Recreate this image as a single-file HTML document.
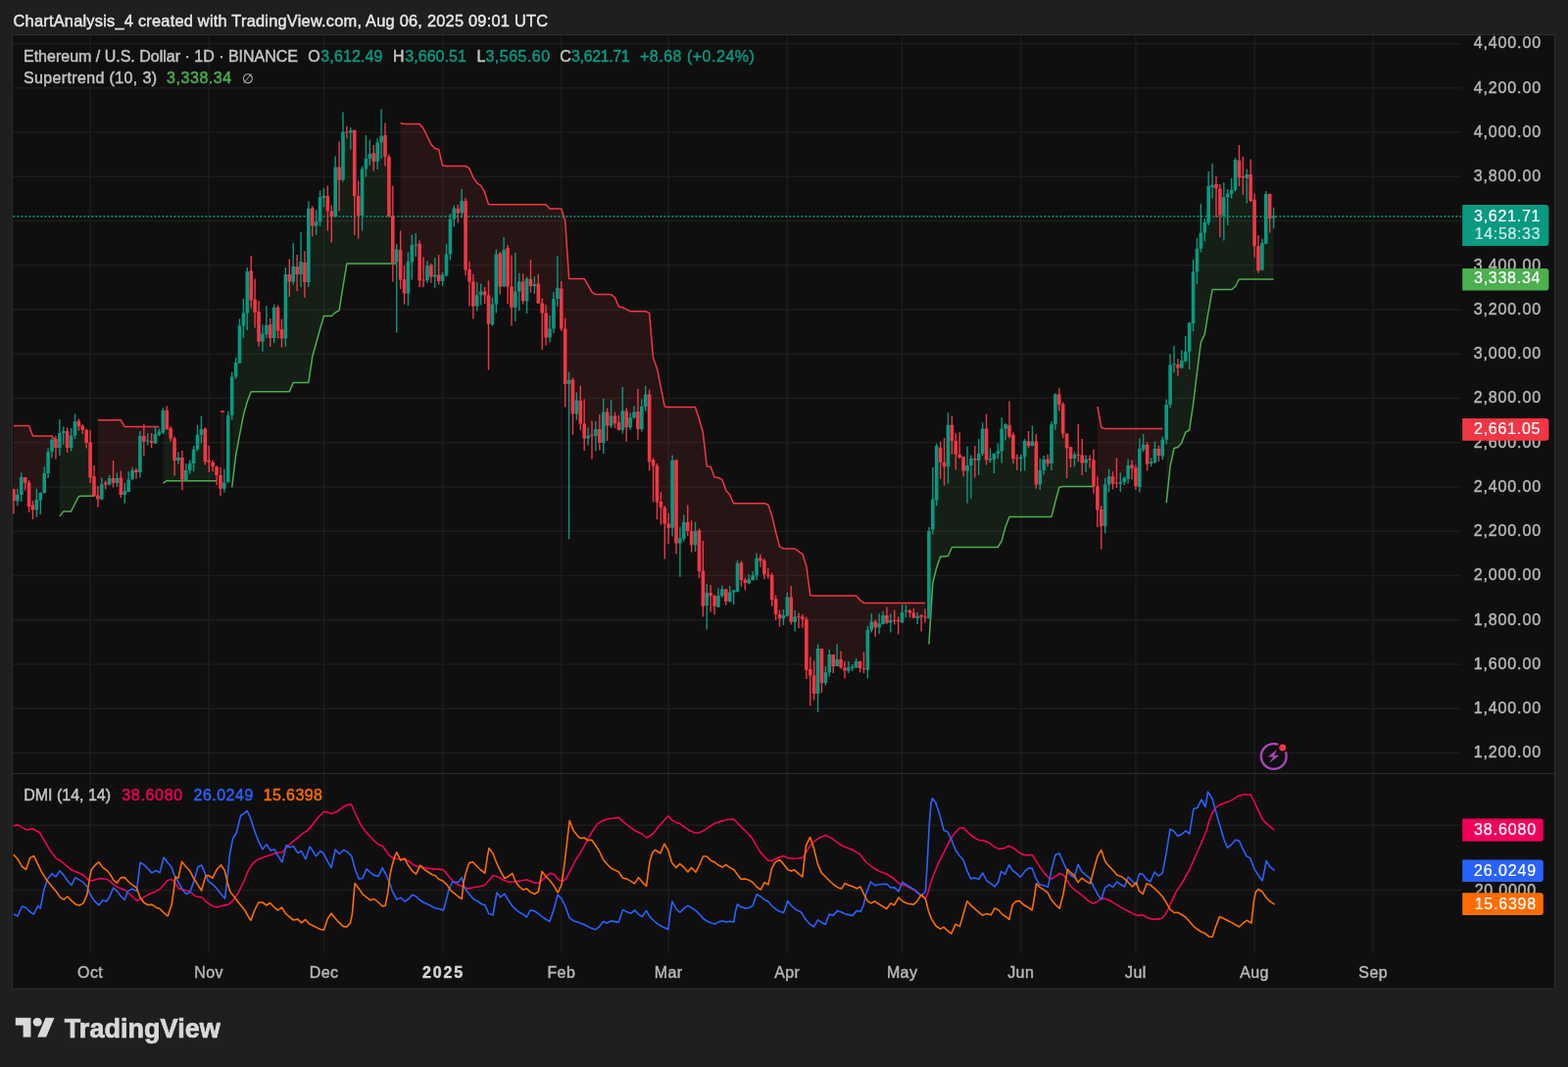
<!DOCTYPE html>
<html lang="en"><head><meta charset="utf-8"><title>ETHUSD chart</title>
<style>html,body{margin:0;padding:0;background:#1f1f1f;width:1600px;height:1089px;overflow:hidden}</style></head>
<body>
<svg width="1600" height="1089" viewBox="0 0 1600 1089" style="position:absolute;left:0;top:0;will-change:transform">
<defs><clipPath id="cp"><rect x="13" y="36" width="1478.5" height="753.4"/></clipPath><clipPath id="cd"><rect x="13" y="790" width="1478.5" height="182"/></clipPath></defs>
<rect x="12.5" y="35.5" width="1574.0" height="973.5" fill="#0f0f0f" stroke="#2c2c2c" stroke-width="1"/>
<path d="M92.10 36V972.5M213.24 36V972.5M330.48 36V972.5M451.62 36V972.5M572.76 36V972.5M682.18 36V972.5M803.32 36V972.5M920.55 36V972.5M1041.70 36V972.5M1158.93 36V972.5M1280.07 36V972.5M1401.21 36V972.5" stroke="#1a1a1a" stroke-width="1.8" fill="none"/>
<path d="M13 768.50H1491.5M13 723.25H1491.5M13 678.00H1491.5M13 632.75H1491.5M13 587.50H1491.5M13 542.25H1491.5M13 497.00H1491.5M13 451.75H1491.5M13 406.50H1491.5M13 361.25H1491.5M13 316.00H1491.5M13 270.75H1491.5M13 225.50H1491.5M13 180.25H1491.5M13 135.00H1491.5M13 89.75H1491.5M13 44.50H1491.5M13 842.25H1491.5M13 908.50H1491.5" stroke="#1c1c1c" stroke-width="1.3" fill="none"/>
<path d="M13 789.4H1586.5" stroke="#2f2f2f" stroke-width="1"/>
<g clip-path="url(#cp)">
<polygon points="13.9,434.4 17.9,434.4 21.8,434.4 25.7,434.4 29.6,434.4 33.5,445.0 37.4,445.0 41.3,445.0 45.2,445.0 49.1,445.0 53.0,445.0 56.9,450.0 56.9,454.7 53.0,456.1 49.1,472.5 45.2,491.6 41.3,510.3 37.4,514.4 33.5,519.4 29.6,505.6 25.7,491.9 21.8,496.6 17.9,507.8 13.9,508.4" fill="#ff5252" fill-opacity="0.1"/>
<polygon points="60.8,526.9 64.7,522.1 68.7,521.9 72.6,521.9 76.5,514.0 80.4,506.5 84.3,506.2 88.2,506.2 92.1,506.2 96.0,506.2 96.0,493.6 92.1,467.7 88.2,446.4 84.3,437.3 80.4,432.8 76.5,436.2 72.6,449.7 68.7,448.8 64.7,442.8 60.8,448.0" fill="#4caf50" fill-opacity="0.1"/>
<polygon points="99.9,428.8 103.8,428.8 107.7,428.8 111.6,428.8 115.5,428.8 119.5,428.8 123.4,428.8 127.3,435.6 131.2,435.6 135.1,435.6 139.0,435.6 142.9,435.6 146.8,435.6 150.7,435.6 154.6,435.6 158.5,435.6 162.4,435.6 162.4,441.7 158.5,445.9 154.6,450.2 150.7,449.1 146.8,448.6 142.9,463.6 139.0,482.0 135.1,483.9 131.2,493.8 127.3,503.3 123.4,495.3 119.5,490.2 115.5,487.2 111.6,490.8 107.7,494.2 103.8,500.5 99.9,507.2" fill="#ff5252" fill-opacity="0.1"/>
<polygon points="166.3,493.1 170.3,490.6 174.2,490.8 178.1,490.8 182.0,490.8 185.9,490.8 189.8,490.8 193.7,490.8 197.6,490.8 201.5,490.8 205.4,490.8 209.3,490.8 213.2,490.8 217.1,490.8 221.1,490.8 221.1,483.0 217.1,474.7 213.2,469.7 209.3,454.8 205.4,439.7 201.5,449.2 197.6,467.0 193.7,476.6 189.8,483.6 185.9,479.1 182.0,468.0 178.1,462.2 174.2,442.5 170.3,427.5 166.3,429.8" fill="#4caf50" fill-opacity="0.1"/>
<polygon points="225.0,420.0 228.9,420.0 228.9,493.1 225.0,491.7" fill="#ff5252" fill-opacity="0.1"/>
<polygon points="236.7,497.5 240.6,465.0 244.5,443.8 248.4,423.8 252.3,410.0 256.2,399.8 260.1,399.8 264.0,399.8 268.0,399.8 271.9,399.8 275.8,399.8 279.7,399.8 283.6,399.8 287.5,399.8 291.4,399.8 295.3,399.8 299.2,390.6 303.1,390.6 307.0,390.6 310.9,390.6 314.8,390.6 318.8,363.8 322.7,350.0 326.6,335.8 330.5,322.5 334.4,322.5 338.3,322.5 342.2,319.0 346.1,316.9 350.0,292.5 353.9,269.0 357.8,269.0 361.7,269.0 365.6,269.0 369.6,269.0 373.5,269.0 377.4,269.0 381.3,269.0 385.2,269.0 389.1,269.0 393.0,269.0 396.9,269.0 400.8,269.0 404.7,269.0 404.7,277.5 400.8,241.4 396.9,190.0 393.0,148.3 389.1,139.4 385.2,156.2 381.3,160.9 377.4,157.5 373.5,163.3 369.6,199.4 365.6,212.0 361.7,176.3 357.8,137.8 353.9,135.0 350.0,154.5 346.1,178.6 342.2,193.3 338.3,223.4 334.4,210.2 330.5,201.2 326.6,213.3 322.7,227.8 318.8,223.8 314.8,250.0 310.9,279.1 307.0,269.2 303.1,277.2 299.2,274.5 295.3,283.8 291.4,313.1 287.5,340.5 283.6,327.0 279.7,329.8 275.8,338.8 271.9,332.5 268.0,344.8 264.0,331.9 260.1,310.8 256.2,289.5 252.3,301.6 248.4,325.5 244.5,350.0 240.6,376.6 236.7,404.2" fill="#4caf50" fill-opacity="0.1"/>
<polygon points="408.6,125.6 412.5,126.5 416.4,126.5 420.4,126.5 424.3,126.5 428.2,126.5 432.1,131.2 436.0,139.4 439.9,147.2 443.8,151.6 447.7,152.5 451.6,168.8 455.5,169.4 459.4,169.4 463.3,169.4 467.2,169.4 471.2,169.4 475.1,169.4 479.0,171.9 482.9,181.2 486.8,186.9 490.7,189.4 494.6,196.2 498.5,208.5 502.4,208.8 506.3,208.8 510.2,208.8 514.1,208.8 518.1,208.8 522.0,208.8 525.9,208.8 529.8,208.8 533.7,208.8 537.6,208.8 541.5,208.8 545.4,208.8 549.3,208.8 553.2,208.8 557.1,208.8 561.0,212.9 564.9,213.1 568.9,213.1 572.8,213.1 576.7,225.0 580.6,284.4 584.5,284.4 588.4,284.4 592.3,284.4 596.2,284.4 600.1,291.0 604.0,298.1 607.9,300.6 611.8,300.6 615.7,300.6 619.7,300.6 623.6,300.6 627.5,303.5 631.4,313.1 635.3,313.8 639.2,315.6 643.1,317.8 647.0,317.8 650.9,317.8 654.8,317.8 658.7,317.8 662.6,319.4 666.5,365.0 670.5,376.2 674.4,395.6 678.3,415.0 682.2,415.6 686.1,415.6 690.0,415.6 693.9,415.6 697.8,415.6 701.7,415.6 705.6,415.6 709.5,415.6 713.4,427.5 717.3,441.2 721.3,476.0 725.2,476.2 729.1,486.9 733.0,487.5 736.9,489.4 740.8,500.6 744.7,505.0 748.6,513.8 752.5,513.8 756.4,513.8 760.3,513.8 764.2,513.8 768.1,513.8 772.1,513.8 776.0,513.8 779.9,513.8 783.8,515.0 787.7,526.2 791.6,543.0 795.5,558.1 799.4,559.8 803.3,560.0 807.2,560.0 811.1,560.0 815.0,562.8 819.0,565.6 822.9,578.1 826.8,607.5 830.7,608.1 834.6,608.1 838.5,608.1 842.4,608.1 846.3,608.1 850.2,608.1 854.1,608.1 858.0,608.1 861.9,608.1 865.8,608.1 869.8,608.1 873.7,608.1 877.6,612.5 881.5,615.6 885.4,615.6 889.3,615.6 893.2,615.6 897.1,615.6 901.0,615.6 904.9,615.6 908.8,615.6 912.7,615.6 916.6,615.6 920.6,615.6 924.5,615.6 928.4,615.6 932.3,615.6 936.2,615.6 940.1,615.6 944.0,615.6 944.0,629.2 940.1,632.2 936.2,630.5 932.3,627.2 928.4,625.3 924.5,623.8 920.6,628.3 916.6,635.9 912.7,631.7 908.8,635.2 904.9,630.0 901.0,631.6 897.1,637.5 893.2,639.4 889.3,637.3 885.4,664.5 881.5,679.4 877.6,679.4 873.7,677.5 869.8,681.4 865.8,681.9 861.9,683.3 858.0,675.5 854.1,672.7 850.2,675.8 846.3,677.0 842.4,690.6 838.5,681.9 834.6,688.6 830.7,696.6 826.8,690.9 822.9,659.5 819.0,632.3 815.0,631.2 811.1,633.0 807.2,619.8 803.3,618.0 799.4,629.8 795.5,630.0 791.6,619.7 787.7,600.5 783.8,585.9 779.9,579.8 776.0,571.6 772.1,578.3 768.1,588.6 764.2,592.3 760.3,594.7 756.4,584.4 752.5,588.8 748.6,606.4 744.7,607.8 740.8,608.4 736.9,604.2 733.0,612.0 729.1,615.3 725.2,608.6 721.3,615.5 717.3,595.6 713.4,563.4 709.5,548.4 705.6,548.3 701.7,534.4 697.8,540.3 693.9,557.7 690.0,514.5 686.1,505.2 682.2,538.0 678.3,534.8 674.4,516.9 670.5,497.8 666.5,481.2 662.6,438.0 658.7,407.7 654.8,425.3 650.9,425.9 647.0,422.2 643.1,430.6 639.2,430.6 635.3,423.9 631.4,433.3 627.5,428.4 623.6,425.9 619.7,430.3 615.7,435.6 611.8,443.1 607.9,443.4 604.0,446.6 600.1,445.6 596.2,436.9 592.3,418.4 588.4,415.2 584.5,409.8 580.6,427.4 576.7,366.9 572.8,313.8 568.9,293.3 564.9,319.7 561.0,337.8 557.1,331.9 553.2,322.5 549.3,297.2 545.4,291.1 541.5,285.2 537.6,298.6 533.7,296.1 529.8,295.2 525.9,299.4 522.0,299.8 518.1,276.4 514.1,270.5 510.2,277.2 506.3,285.9 502.4,319.5 498.5,323.9 494.6,300.5 490.7,299.8 486.8,304.8 482.9,301.4 479.0,285.5 475.1,240.9 471.2,209.5 467.2,216.7 463.3,219.2 459.4,241.7 455.5,268.0 451.6,284.4 447.7,279.5 443.8,280.0 439.9,277.7 436.0,278.1 432.1,281.9 428.2,268.4 424.3,249.8 420.4,260.6 416.4,283.9 412.5,291.6 408.6,267.8" fill="#ff5252" fill-opacity="0.1"/>
<polygon points="947.9,657.5 951.8,595.0 955.7,579.4 959.6,568.1 963.5,568.1 967.4,567.5 971.4,558.5 975.3,558.5 979.2,558.5 983.1,558.5 987.0,558.5 990.9,558.5 994.8,558.5 998.7,558.5 1002.6,558.5 1006.5,558.5 1010.4,558.5 1014.3,558.5 1018.2,558.5 1022.2,551.9 1026.1,537.5 1030.0,527.4 1033.9,527.4 1037.8,527.4 1041.7,527.4 1045.6,527.4 1049.5,527.4 1053.4,527.4 1057.3,527.4 1061.2,527.4 1065.1,527.4 1069.0,527.4 1073.0,527.4 1076.9,512.0 1080.8,497.2 1084.7,496.5 1088.6,496.5 1092.5,496.5 1096.4,496.5 1100.3,496.5 1104.2,496.5 1108.1,496.5 1112.0,496.5 1115.9,496.5 1115.9,482.0 1112.0,469.8 1108.1,471.9 1104.2,467.5 1100.3,458.1 1096.4,467.3 1092.5,464.4 1088.6,457.7 1084.7,428.1 1080.8,407.8 1076.9,418.9 1073.0,454.1 1069.0,470.5 1065.1,474.5 1061.2,485.6 1057.3,471.7 1053.4,448.9 1049.5,450.6 1045.6,461.2 1041.7,469.8 1037.8,469.8 1033.9,456.6 1030.0,434.1 1026.1,438.0 1022.2,449.2 1018.2,461.1 1014.3,469.4 1010.4,466.7 1006.5,450.9 1002.6,449.2 998.7,466.6 994.8,470.0 990.9,479.1 987.0,481.2 983.1,474.7 979.2,460.0 975.3,458.8 971.4,443.0 967.4,456.2 963.5,472.7 959.6,467.0 955.7,483.6 951.8,518.1 947.9,585.6" fill="#4caf50" fill-opacity="0.1"/>
<polygon points="1119.9,415.0 1123.8,436.2 1127.7,437.5 1131.6,437.5 1135.5,437.5 1139.4,437.5 1143.3,437.5 1147.2,437.5 1151.1,437.5 1155.0,437.5 1158.9,437.5 1162.8,437.5 1166.7,437.5 1170.7,437.5 1174.6,437.5 1178.5,437.5 1182.4,437.5 1186.3,437.5 1186.3,457.3 1182.4,462.2 1178.5,463.4 1174.6,472.0 1170.7,464.8 1166.7,454.2 1162.8,476.2 1158.9,487.0 1155.0,477.8 1151.1,481.6 1147.2,490.3 1143.3,492.5 1139.4,487.8 1135.5,490.2 1131.6,490.5 1127.7,515.9 1123.8,533.4 1119.9,510.3" fill="#ff5252" fill-opacity="0.1"/>
<polygon points="1190.2,513.1 1194.1,476.2 1198.0,457.5 1201.9,456.5 1205.8,451.9 1209.7,441.2 1213.6,439.0 1217.5,413.0 1221.5,380.0 1225.4,349.4 1229.3,341.2 1233.2,317.5 1237.1,295.6 1241.0,295.6 1244.9,295.6 1248.8,295.6 1252.7,295.6 1256.6,295.6 1260.5,292.5 1264.4,285.0 1268.3,285.0 1272.3,285.0 1276.2,285.0 1280.1,285.0 1284.0,285.0 1287.9,285.0 1291.8,285.0 1295.7,285.0 1299.6,285.0 1299.6,222.1 1295.7,214.1 1291.8,222.8 1287.9,260.9 1284.0,261.6 1280.1,228.8 1276.2,188.0 1272.3,185.0 1268.3,180.0 1264.4,170.8 1260.5,178.4 1256.6,194.1 1252.7,205.5 1248.8,213.3 1244.9,210.5 1241.0,195.6 1237.1,187.3 1233.2,205.6 1229.3,233.4 1225.4,239.2 1221.5,266.0 1217.5,302.6 1213.6,348.4 1209.7,360.0 1205.8,369.4 1201.9,374.4 1198.0,369.4 1194.1,390.8 1190.2,430.8" fill="#4caf50" fill-opacity="0.1"/>
<polyline points="13.9,434.4 17.9,434.4 21.8,434.4 25.7,434.4 29.6,434.4 33.5,445.0 37.4,445.0 41.3,445.0 45.2,445.0 49.1,445.0 53.0,445.0 56.9,450.0" fill="none" stroke="#f23645" stroke-width="1.5" stroke-linejoin="round"/>
<polyline points="60.8,526.9 64.7,522.1 68.7,521.9 72.6,521.9 76.5,514.0 80.4,506.5 84.3,506.2 88.2,506.2 92.1,506.2 96.0,506.2" fill="none" stroke="#4caf50" stroke-width="1.5" stroke-linejoin="round"/>
<polyline points="99.9,428.8 103.8,428.8 107.7,428.8 111.6,428.8 115.5,428.8 119.5,428.8 123.4,428.8 127.3,435.6 131.2,435.6 135.1,435.6 139.0,435.6 142.9,435.6 146.8,435.6 150.7,435.6 154.6,435.6 158.5,435.6 162.4,435.6" fill="none" stroke="#f23645" stroke-width="1.5" stroke-linejoin="round"/>
<polyline points="166.3,493.1 170.3,490.6 174.2,490.8 178.1,490.8 182.0,490.8 185.9,490.8 189.8,490.8 193.7,490.8 197.6,490.8 201.5,490.8 205.4,490.8 209.3,490.8 213.2,490.8 217.1,490.8 221.1,490.8" fill="none" stroke="#4caf50" stroke-width="1.5" stroke-linejoin="round"/>
<polyline points="225.0,420.0 228.9,420.0" fill="none" stroke="#f23645" stroke-width="1.5" stroke-linejoin="round"/>
<polyline points="236.7,497.5 240.6,465.0 244.5,443.8 248.4,423.8 252.3,410.0 256.2,399.8 260.1,399.8 264.0,399.8 268.0,399.8 271.9,399.8 275.8,399.8 279.7,399.8 283.6,399.8 287.5,399.8 291.4,399.8 295.3,399.8 299.2,390.6 303.1,390.6 307.0,390.6 310.9,390.6 314.8,390.6 318.8,363.8 322.7,350.0 326.6,335.8 330.5,322.5 334.4,322.5 338.3,322.5 342.2,319.0 346.1,316.9 350.0,292.5 353.9,269.0 357.8,269.0 361.7,269.0 365.6,269.0 369.6,269.0 373.5,269.0 377.4,269.0 381.3,269.0 385.2,269.0 389.1,269.0 393.0,269.0 396.9,269.0 400.8,269.0 404.7,269.0" fill="none" stroke="#4caf50" stroke-width="1.5" stroke-linejoin="round"/>
<polyline points="408.6,125.6 412.5,126.5 416.4,126.5 420.4,126.5 424.3,126.5 428.2,126.5 432.1,131.2 436.0,139.4 439.9,147.2 443.8,151.6 447.7,152.5 451.6,168.8 455.5,169.4 459.4,169.4 463.3,169.4 467.2,169.4 471.2,169.4 475.1,169.4 479.0,171.9 482.9,181.2 486.8,186.9 490.7,189.4 494.6,196.2 498.5,208.5 502.4,208.8 506.3,208.8 510.2,208.8 514.1,208.8 518.1,208.8 522.0,208.8 525.9,208.8 529.8,208.8 533.7,208.8 537.6,208.8 541.5,208.8 545.4,208.8 549.3,208.8 553.2,208.8 557.1,208.8 561.0,212.9 564.9,213.1 568.9,213.1 572.8,213.1 576.7,225.0 580.6,284.4 584.5,284.4 588.4,284.4 592.3,284.4 596.2,284.4 600.1,291.0 604.0,298.1 607.9,300.6 611.8,300.6 615.7,300.6 619.7,300.6 623.6,300.6 627.5,303.5 631.4,313.1 635.3,313.8 639.2,315.6 643.1,317.8 647.0,317.8 650.9,317.8 654.8,317.8 658.7,317.8 662.6,319.4 666.5,365.0 670.5,376.2 674.4,395.6 678.3,415.0 682.2,415.6 686.1,415.6 690.0,415.6 693.9,415.6 697.8,415.6 701.7,415.6 705.6,415.6 709.5,415.6 713.4,427.5 717.3,441.2 721.3,476.0 725.2,476.2 729.1,486.9 733.0,487.5 736.9,489.4 740.8,500.6 744.7,505.0 748.6,513.8 752.5,513.8 756.4,513.8 760.3,513.8 764.2,513.8 768.1,513.8 772.1,513.8 776.0,513.8 779.9,513.8 783.8,515.0 787.7,526.2 791.6,543.0 795.5,558.1 799.4,559.8 803.3,560.0 807.2,560.0 811.1,560.0 815.0,562.8 819.0,565.6 822.9,578.1 826.8,607.5 830.7,608.1 834.6,608.1 838.5,608.1 842.4,608.1 846.3,608.1 850.2,608.1 854.1,608.1 858.0,608.1 861.9,608.1 865.8,608.1 869.8,608.1 873.7,608.1 877.6,612.5 881.5,615.6 885.4,615.6 889.3,615.6 893.2,615.6 897.1,615.6 901.0,615.6 904.9,615.6 908.8,615.6 912.7,615.6 916.6,615.6 920.6,615.6 924.5,615.6 928.4,615.6 932.3,615.6 936.2,615.6 940.1,615.6 944.0,615.6" fill="none" stroke="#f23645" stroke-width="1.5" stroke-linejoin="round"/>
<polyline points="947.9,657.5 951.8,595.0 955.7,579.4 959.6,568.1 963.5,568.1 967.4,567.5 971.4,558.5 975.3,558.5 979.2,558.5 983.1,558.5 987.0,558.5 990.9,558.5 994.8,558.5 998.7,558.5 1002.6,558.5 1006.5,558.5 1010.4,558.5 1014.3,558.5 1018.2,558.5 1022.2,551.9 1026.1,537.5 1030.0,527.4 1033.9,527.4 1037.8,527.4 1041.7,527.4 1045.6,527.4 1049.5,527.4 1053.4,527.4 1057.3,527.4 1061.2,527.4 1065.1,527.4 1069.0,527.4 1073.0,527.4 1076.9,512.0 1080.8,497.2 1084.7,496.5 1088.6,496.5 1092.5,496.5 1096.4,496.5 1100.3,496.5 1104.2,496.5 1108.1,496.5 1112.0,496.5 1115.9,496.5" fill="none" stroke="#4caf50" stroke-width="1.5" stroke-linejoin="round"/>
<polyline points="1119.9,415.0 1123.8,436.2 1127.7,437.5 1131.6,437.5 1135.5,437.5 1139.4,437.5 1143.3,437.5 1147.2,437.5 1151.1,437.5 1155.0,437.5 1158.9,437.5 1162.8,437.5 1166.7,437.5 1170.7,437.5 1174.6,437.5 1178.5,437.5 1182.4,437.5 1186.3,437.5" fill="none" stroke="#f23645" stroke-width="1.5" stroke-linejoin="round"/>
<polyline points="1190.2,513.1 1194.1,476.2 1198.0,457.5 1201.9,456.5 1205.8,451.9 1209.7,441.2 1213.6,439.0 1217.5,413.0 1221.5,380.0 1225.4,349.4 1229.3,341.2 1233.2,317.5 1237.1,295.6 1241.0,295.6 1244.9,295.6 1248.8,295.6 1252.7,295.6 1256.6,295.6 1260.5,292.5 1264.4,285.0 1268.3,285.0 1272.3,285.0 1276.2,285.0 1280.1,285.0 1284.0,285.0 1287.9,285.0 1291.8,285.0 1295.7,285.0 1299.6,285.0" fill="none" stroke="#4caf50" stroke-width="1.5" stroke-linejoin="round"/>
<path d="M13.5 220.9H1492.5" stroke="#089981" stroke-width="1.7" stroke-dasharray="1.8 2.2" fill="none"/>
<path d="M17.85 498.8V516.2M21.76 482.5V511.9M37.39 498.8V528.1M41.30 502.5V525.0M45.21 476.2V503.8M49.11 457.5V488.1M53.02 446.9V467.5M60.84 428.1V465.0M64.75 435.6V453.8M72.56 436.9V460.6M76.47 422.5V448.1M103.82 487.5V510.6M111.64 485.0V495.6M119.45 482.5V496.9M127.27 493.1V513.8M131.18 481.2V502.5M135.09 476.9V490.0M142.90 440.0V487.5M150.72 441.9V454.4M158.53 435.0V453.1M162.44 437.5V445.0M166.35 416.2V443.1M181.98 461.2V473.8M189.79 473.1V491.2M193.70 469.4V483.8M197.61 455.0V481.2M201.52 433.8V460.6M205.43 424.4V452.5M228.87 478.8V502.5M232.78 419.4V493.1M236.69 380.0V428.8M240.60 365.0V386.9M244.50 325.6V371.2M248.41 305.0V345.0M252.32 273.1V336.9M267.95 331.2V358.8M271.86 311.9V345.0M279.67 310.6V350.0M291.40 273.1V353.8M299.21 248.1V290.6M307.03 236.9V293.1M314.84 205.6V293.1M322.66 214.4V240.0M326.57 194.4V231.2M330.48 191.9V211.2M342.20 159.4V221.9M350.01 114.4V185.6M357.83 130.0V152.5M369.55 169.4V235.6M373.46 138.1V180.6M377.37 142.5V168.8M385.18 141.2V173.1M389.09 111.2V161.9M404.72 248.8V339.4M416.45 257.5V311.9M420.36 239.4V285.6M424.26 238.1V261.9M435.99 266.2V288.8M443.80 263.1V293.8M451.62 278.1V291.9M455.53 248.8V282.5M459.43 218.1V265.6M463.34 209.4V231.2M471.16 193.1V222.5M486.79 288.1V317.5M490.70 289.4V311.2M502.42 303.8V332.5M506.33 254.4V319.4M514.14 241.9V292.5M525.87 258.1V328.1M529.77 278.8V316.9M537.59 282.5V320.0M545.40 282.5V300.0M561.04 321.9V349.4M564.94 298.1V340.0M568.85 261.2V313.1M580.57 379.4V550.2M588.39 400.6V428.8M600.11 436.2V454.4M607.93 430.0V460.6M615.75 406.9V463.1M623.56 408.1V436.9M635.28 395.0V442.5M643.10 421.2V438.8M647.01 414.4V427.5M654.82 407.5V440.6M658.73 393.8V419.4M686.09 464.4V547.5M693.90 538.1V588.8M697.81 525.6V552.5M709.53 532.5V563.1M721.26 596.2V642.5M732.98 600.6V620.0M736.89 597.5V610.0M744.70 598.1V615.0M748.61 601.9V616.9M752.52 571.9V604.4M764.24 586.2V596.2M768.15 583.1V592.5M772.06 564.4V591.9M799.41 621.9V638.1M803.32 604.4V629.4M811.14 623.1V644.4M834.58 657.5V726.9M842.40 680.0V699.4M846.31 663.1V690.6M854.12 657.5V680.0M865.84 675.0V686.9M869.75 678.1V685.0M873.66 671.9V681.9M885.38 638.8V692.5M889.29 626.2V645.6M897.11 626.2V646.9M901.01 623.8V637.5M908.83 626.2V645.6M920.55 616.9V635.6M924.46 617.5V630.6M936.18 625.0V636.9M947.91 538.1V631.2M951.82 476.9V545.6M955.72 452.5V516.2M967.45 421.2V493.8M986.99 455.6V513.8M990.89 464.4V508.8M998.71 448.1V485.0M1002.62 431.2V465.0M1010.43 457.5V471.9M1014.34 462.5V483.1M1018.25 452.5V468.1M1022.16 426.2V472.5M1026.06 431.9V449.4M1041.70 463.8V481.2M1045.60 448.1V480.6M1053.42 434.4V455.6M1061.23 468.1V500.0M1065.14 465.0V484.4M1072.96 430.0V480.0M1076.87 401.2V438.8M1096.40 461.2V476.2M1108.13 464.4V481.9M1127.67 488.1V544.4M1131.57 478.8V502.5M1143.30 482.5V501.9M1147.21 486.2V495.0M1151.11 468.8V493.8M1162.84 447.5V502.5M1166.74 443.1V461.2M1174.56 467.5V476.2M1178.47 450.6V473.1M1186.28 445.6V469.4M1190.19 407.5V453.8M1194.10 361.2V416.2M1198.01 353.1V380.6M1205.82 357.5V376.2M1209.73 343.1V369.4M1213.64 328.8V376.9M1217.55 265.0V338.1M1221.45 243.1V290.0M1225.36 208.1V257.5M1229.27 223.1V246.2M1233.18 175.0V230.0M1237.09 166.9V202.5M1248.81 186.2V245.6M1252.72 193.1V230.0M1256.62 181.9V202.5M1260.53 161.2V195.6M1272.26 172.5V207.5M1287.89 243.8V276.2M1291.79 195.0V249.4M1299.61 211.8V233.2" stroke="#089981" stroke-width="1.4" fill="none"/>
<path d="M13.94 498.8V524.4M25.67 486.9V500.6M29.58 490.0V523.1M33.48 511.2V530.0M56.93 445.0V468.8M68.65 436.2V461.9M80.38 427.5V439.4M84.28 433.1V443.1M88.19 437.5V457.5M92.10 438.8V493.1M96.01 475.0V506.9M99.92 496.2V517.5M107.73 490.6V499.4M115.55 470.0V497.5M123.36 480.6V508.1M138.99 478.1V488.8M146.81 433.1V465.6M154.62 441.9V456.9M170.26 414.4V438.8M174.16 435.0V450.6M178.07 445.6V485.6M185.89 460.0V500.0M209.33 436.2V474.4M213.24 455.0V481.9M217.15 469.4V481.2M221.06 475.6V495.0M224.97 476.9V506.2M256.23 261.2V314.4M260.14 284.4V334.4M264.04 306.9V353.8M275.77 325.0V353.8M283.58 311.2V345.6M287.49 325.6V354.4M295.31 264.4V303.1M303.12 260.0V296.9M310.94 256.2V303.8M318.75 210.6V241.2M334.38 189.4V235.6M338.29 209.4V247.5M346.11 144.4V215.6M353.92 128.8V141.2M361.74 132.5V240.0M365.65 184.4V243.8M381.28 148.1V174.4M393.00 125.6V169.4M396.91 157.5V221.9M400.82 189.4V287.5M408.63 235.6V295.0M412.54 271.2V310.6M428.17 245.6V293.1M432.08 262.5V293.1M439.89 268.8V288.8M447.71 260.0V290.6M467.25 208.8V227.5M475.06 201.9V281.2M478.97 266.9V312.5M482.88 280.0V325.6M494.60 293.1V310.0M498.51 286.2V377.5M510.23 256.9V300.6M518.05 250.0V310.0M521.96 260.6V332.5M533.68 279.4V310.6M541.50 265.0V298.8M549.31 280.0V310.0M553.22 304.4V356.9M557.13 311.2V352.5M572.76 286.9V338.1M576.67 324.4V415.6M584.48 385.6V443.8M592.30 393.8V438.8M596.21 407.5V460.0M604.02 429.4V468.8M611.84 423.1V459.4M619.65 416.2V450.0M627.47 420.6V436.9M631.38 423.8V439.4M639.19 416.2V450.6M650.92 396.9V448.8M662.64 397.5V480.6M666.55 467.5V512.5M670.45 473.1V530.0M674.36 501.9V535.6M678.27 516.2V570.6M682.18 523.8V555.0M689.99 468.8V565.6M701.72 515.6V546.9M705.62 531.2V563.8M713.44 539.4V590.0M717.35 551.9V629.4M725.16 596.9V624.4M729.07 606.9V627.5M740.79 601.2V617.5M756.43 572.5V598.8M760.33 589.4V602.5M775.97 565.6V578.8M779.87 570.0V591.2M783.78 579.4V590.6M787.69 584.4V618.8M791.60 607.5V633.1M795.50 622.5V639.4M807.23 598.1V637.5M815.04 625.6V641.2M818.95 626.9V641.2M822.86 629.4V693.1M826.77 670.6V720.6M830.67 674.4V714.4M838.49 661.9V706.9M850.21 668.1V686.9M858.03 664.4V683.1M861.94 675.0V692.5M877.57 674.4V686.2M881.48 665.6V686.9M893.20 632.5V650.0M904.92 619.4V636.9M912.74 622.5V637.5M916.65 629.4V647.5M928.37 621.9V630.6M932.28 621.2V631.2M940.09 626.9V644.4M944.00 621.2V635.6M959.63 450.6V488.8M963.54 446.9V495.6M971.36 424.4V463.8M975.26 441.9V479.4M979.17 441.2V468.1M983.08 465.6V486.2M994.80 455.0V487.5M1006.53 422.5V474.4M1029.97 409.4V447.5M1033.88 441.2V473.1M1037.79 463.8V480.0M1049.51 440.0V456.9M1057.33 443.1V498.8M1069.05 463.8V476.2M1080.77 396.2V419.4M1084.68 410.6V446.9M1088.59 442.5V488.1M1092.50 456.2V476.9M1100.31 433.1V471.2M1104.22 448.1V485.0M1112.04 464.4V477.5M1115.94 458.8V503.8M1119.85 486.2V538.1M1123.76 516.2V560.6M1135.48 481.2V499.4M1139.39 467.5V498.1M1155.02 469.4V489.4M1158.93 474.4V500.0M1170.65 451.2V480.6M1182.38 454.4V471.2M1201.92 366.2V383.8M1240.99 180.0V221.9M1244.90 188.1V241.9M1264.44 148.1V190.0M1268.35 160.0V198.8M1276.16 162.5V206.2M1280.07 197.5V262.5M1283.98 240.0V278.8M1295.70 197.5V237.5" stroke="#f23645" stroke-width="1.4" fill="none"/>
<path d="M16.05 505.0h3.6V511.2h-3.6zM19.96 486.9h3.6V505.0h-3.6zM35.59 510.0h3.6V520.6h-3.6zM39.50 503.1h3.6V510.6h-3.6zM43.41 483.1h3.6V503.1h-3.6zM47.31 461.2h3.6V483.1h-3.6zM51.22 448.8h3.6V461.2h-3.6zM59.04 441.9h3.6V456.9h-3.6zM62.95 440.0h3.6V441.9h-3.6zM70.76 444.4h3.6V456.9h-3.6zM74.67 430.0h3.6V444.4h-3.6zM102.02 494.4h3.6V509.4h-3.6zM109.84 488.1h3.6V494.4h-3.6zM117.65 488.1h3.6V493.1h-3.6zM125.47 501.2h3.6V505.0h-3.6zM129.38 489.4h3.6V501.9h-3.6zM133.29 480.0h3.6V488.8h-3.6zM141.10 445.0h3.6V481.9h-3.6zM148.92 449.4h3.6V450.6h-3.6zM156.73 443.1h3.6V452.5h-3.6zM160.64 440.6h3.6V443.8h-3.6zM164.55 418.8h3.6V441.2h-3.6zM180.18 466.9h3.6V470.0h-3.6zM187.99 480.0h3.6V490.0h-3.6zM191.90 473.1h3.6V480.0h-3.6zM195.81 458.8h3.6V473.1h-3.6zM199.72 443.8h3.6V458.8h-3.6zM203.63 438.1h3.6V443.8h-3.6zM227.07 492.5h3.6V498.8h-3.6zM230.98 423.8h3.6V491.9h-3.6zM234.89 384.4h3.6V423.8h-3.6zM238.80 370.0h3.6V384.4h-3.6zM242.70 332.5h3.6V370.6h-3.6zM246.61 319.4h3.6V332.5h-3.6zM250.52 276.9h3.6V319.4h-3.6zM266.15 340.6h3.6V348.8h-3.6zM270.06 331.9h3.6V341.2h-3.6zM277.87 313.8h3.6V345.0h-3.6zM289.60 280.0h3.6V345.6h-3.6zM297.41 271.9h3.6V287.5h-3.6zM305.23 266.9h3.6V280.0h-3.6zM313.04 213.1h3.6V288.1h-3.6zM320.86 226.2h3.6V230.6h-3.6zM324.77 201.2h3.6V226.2h-3.6zM328.68 200.0h3.6V201.9h-3.6zM340.40 170.6h3.6V221.2h-3.6zM348.21 134.4h3.6V183.8h-3.6zM356.03 133.1h3.6V135.6h-3.6zM367.75 172.5h3.6V220.0h-3.6zM371.66 161.9h3.6V172.5h-3.6zM375.57 156.9h3.6V161.9h-3.6zM383.38 145.6h3.6V165.0h-3.6zM387.29 138.8h3.6V145.6h-3.6zM402.92 254.4h3.6V267.5h-3.6zM414.65 266.9h3.6V299.4h-3.6zM418.56 250.0h3.6V267.5h-3.6zM422.46 249.4h3.6V250.4h-3.6zM434.19 271.2h3.6V286.2h-3.6zM442.00 280.6h3.6V282.5h-3.6zM449.82 280.6h3.6V286.9h-3.6zM453.73 259.4h3.6V281.2h-3.6zM457.63 223.8h3.6V259.4h-3.6zM461.54 212.5h3.6V223.8h-3.6zM469.36 205.0h3.6V217.5h-3.6zM484.99 301.2h3.6V312.5h-3.6zM488.90 297.5h3.6V301.2h-3.6zM500.62 310.6h3.6V331.2h-3.6zM504.53 259.4h3.6V310.6h-3.6zM512.34 255.0h3.6V292.5h-3.6zM524.07 297.5h3.6V313.8h-3.6zM527.97 287.5h3.6V297.5h-3.6zM535.79 284.4h3.6V307.5h-3.6zM543.60 290.0h3.6V291.9h-3.6zM559.24 335.6h3.6V344.4h-3.6zM563.14 305.0h3.6V335.6h-3.6zM567.05 293.8h3.6V305.0h-3.6zM578.77 388.1h3.6V391.9h-3.6zM586.59 408.8h3.6V422.5h-3.6zM598.31 444.4h3.6V447.5h-3.6zM606.13 438.1h3.6V445.0h-3.6zM613.95 420.6h3.6V451.9h-3.6zM621.76 424.4h3.6V434.4h-3.6zM633.48 419.4h3.6V438.8h-3.6zM641.30 426.2h3.6V436.2h-3.6zM645.21 420.6h3.6V426.2h-3.6zM653.02 415.0h3.6V438.1h-3.6zM656.93 402.5h3.6V415.0h-3.6zM684.29 470.0h3.6V538.8h-3.6zM692.10 549.4h3.6V554.4h-3.6zM696.01 533.1h3.6V550.0h-3.6zM707.73 541.9h3.6V556.2h-3.6zM719.46 605.0h3.6V618.1h-3.6zM731.18 608.1h3.6V619.4h-3.6zM735.09 601.2h3.6V608.1h-3.6zM742.90 604.4h3.6V613.8h-3.6zM746.81 602.5h3.6V604.4h-3.6zM750.72 575.0h3.6V603.8h-3.6zM762.44 591.2h3.6V595.6h-3.6zM766.35 586.9h3.6V591.9h-3.6zM770.26 569.4h3.6V587.5h-3.6zM797.61 628.1h3.6V631.2h-3.6zM801.52 609.4h3.6V628.8h-3.6zM809.34 629.4h3.6V635.0h-3.6zM832.78 661.9h3.6V708.1h-3.6zM840.60 686.2h3.6V696.9h-3.6zM844.51 668.1h3.6V686.2h-3.6zM852.32 673.1h3.6V680.0h-3.6zM864.04 681.2h3.6V684.4h-3.6zM867.95 680.6h3.6V681.9h-3.6zM871.86 675.0h3.6V681.2h-3.6zM883.58 643.1h3.6V683.8h-3.6zM887.49 634.4h3.6V643.1h-3.6zM895.31 636.2h3.6V640.6h-3.6zM899.21 628.1h3.6V636.9h-3.6zM907.03 633.1h3.6V635.6h-3.6zM918.75 625.0h3.6V635.6h-3.6zM922.66 623.1h3.6V624.1h-3.6zM934.38 628.8h3.6V631.2h-3.6zM946.11 541.9h3.6V631.2h-3.6zM950.02 509.4h3.6V540.6h-3.6zM953.92 455.0h3.6V510.6h-3.6zM965.65 433.8h3.6V476.2h-3.6zM985.19 475.0h3.6V480.6h-3.6zM989.09 468.1h3.6V475.0h-3.6zM996.91 463.1h3.6V470.0h-3.6zM1000.82 437.5h3.6V463.1h-3.6zM1008.63 468.1h3.6V469.4h-3.6zM1012.54 463.1h3.6V468.8h-3.6zM1016.45 460.6h3.6V463.1h-3.6zM1020.36 437.5h3.6V460.6h-3.6zM1024.26 433.1h3.6V437.5h-3.6zM1039.90 466.2h3.6V468.1h-3.6zM1043.80 450.0h3.6V466.2h-3.6zM1051.62 450.6h3.6V455.0h-3.6zM1059.43 480.0h3.6V494.4h-3.6zM1063.34 468.8h3.6V480.0h-3.6zM1071.16 433.1h3.6V473.1h-3.6zM1075.07 402.5h3.6V433.1h-3.6zM1094.60 463.8h3.6V468.1h-3.6zM1106.33 468.8h3.6V472.5h-3.6zM1125.87 494.4h3.6V536.9h-3.6zM1129.77 486.2h3.6V494.4h-3.6zM1141.50 491.9h3.6V493.8h-3.6zM1145.41 488.1h3.6V491.9h-3.6zM1149.31 475.0h3.6V488.8h-3.6zM1161.04 458.1h3.6V496.9h-3.6zM1164.94 453.8h3.6V458.8h-3.6zM1172.76 471.2h3.6V473.1h-3.6zM1176.67 458.1h3.6V471.9h-3.6zM1184.48 448.8h3.6V465.6h-3.6zM1188.39 413.1h3.6V448.8h-3.6zM1192.30 372.5h3.6V413.1h-3.6zM1196.21 371.2h3.6V372.5h-3.6zM1204.02 368.1h3.6V375.6h-3.6zM1207.93 358.8h3.6V368.8h-3.6zM1211.84 329.4h3.6V358.8h-3.6zM1215.75 277.2h3.6V330.0h-3.6zM1219.65 253.8h3.6V277.2h-3.6zM1223.56 237.5h3.6V253.8h-3.6zM1227.47 226.9h3.6V237.5h-3.6zM1231.38 190.0h3.6V227.5h-3.6zM1235.29 188.8h3.6V191.2h-3.6zM1247.01 201.2h3.6V220.0h-3.6zM1250.92 197.5h3.6V201.2h-3.6zM1254.82 193.8h3.6V198.1h-3.6zM1258.73 163.1h3.6V193.8h-3.6zM1270.46 178.1h3.6V181.9h-3.6zM1286.09 248.1h3.6V275.6h-3.6zM1289.99 198.1h3.6V248.8h-3.6zM1297.81 220.6h3.6V222.6h-3.6z" fill="#089981"/>
<path d="M12.14 499.4h3.6V511.2h-3.6zM23.87 486.9h3.6V493.1h-3.6zM27.78 492.5h3.6V516.9h-3.6zM31.68 515.6h3.6V520.6h-3.6zM55.13 448.1h3.6V456.9h-3.6zM66.85 440.0h3.6V456.9h-3.6zM78.58 429.4h3.6V435.0h-3.6zM82.48 434.4h3.6V438.8h-3.6zM86.39 438.8h3.6V451.9h-3.6zM90.30 451.2h3.6V487.5h-3.6zM94.21 486.2h3.6V506.2h-3.6zM98.12 505.6h3.6V509.4h-3.6zM105.93 492.5h3.6V494.4h-3.6zM113.75 488.1h3.6V493.1h-3.6zM121.56 487.5h3.6V505.0h-3.6zM137.19 479.4h3.6V481.9h-3.6zM145.01 445.0h3.6V450.6h-3.6zM152.82 450.0h3.6V451.9h-3.6zM168.46 418.8h3.6V438.1h-3.6zM172.36 436.9h3.6V447.5h-3.6zM176.27 447.5h3.6V470.0h-3.6zM184.09 466.9h3.6V489.4h-3.6zM207.53 437.5h3.6V471.2h-3.6zM211.44 470.0h3.6V471.9h-3.6zM215.35 471.9h3.6V476.2h-3.6zM219.26 476.2h3.6V485.0h-3.6zM223.17 485.0h3.6V498.8h-3.6zM254.43 276.2h3.6V306.2h-3.6zM258.34 305.6h3.6V318.8h-3.6zM262.24 318.1h3.6V348.8h-3.6zM273.97 331.2h3.6V345.0h-3.6zM281.78 313.8h3.6V337.5h-3.6zM285.69 336.2h3.6V345.6h-3.6zM293.51 280.0h3.6V287.5h-3.6zM301.32 271.9h3.6V280.0h-3.6zM309.14 268.1h3.6V288.1h-3.6zM316.95 212.5h3.6V230.6h-3.6zM332.58 200.0h3.6V215.6h-3.6zM336.49 215.6h3.6V221.2h-3.6zM344.31 170.6h3.6V183.8h-3.6zM352.12 134.4h3.6V135.6h-3.6zM359.94 132.8h3.6V200.0h-3.6zM363.85 200.0h3.6V220.0h-3.6zM379.48 156.2h3.6V165.0h-3.6zM391.20 138.1h3.6V160.0h-3.6zM395.11 160.0h3.6V220.6h-3.6zM399.02 220.6h3.6V268.1h-3.6zM406.83 255.0h3.6V285.6h-3.6zM410.74 285.0h3.6V299.4h-3.6zM426.37 248.8h3.6V286.2h-3.6zM430.28 285.6h3.6V286.6h-3.6zM438.09 270.6h3.6V282.5h-3.6zM445.91 280.6h3.6V286.9h-3.6zM465.45 213.1h3.6V217.5h-3.6zM473.26 205.0h3.6V275.6h-3.6zM477.17 275.0h3.6V287.5h-3.6zM481.08 287.5h3.6V312.5h-3.6zM492.80 297.5h3.6V301.2h-3.6zM496.71 301.2h3.6V330.6h-3.6zM508.43 258.8h3.6V292.5h-3.6zM516.25 253.1h3.6V292.5h-3.6zM520.16 292.5h3.6V313.8h-3.6zM531.88 287.5h3.6V306.9h-3.6zM539.70 285.0h3.6V291.9h-3.6zM547.51 289.4h3.6V309.4h-3.6zM551.42 309.4h3.6V319.4h-3.6zM555.33 319.4h3.6V344.4h-3.6zM570.96 294.4h3.6V335.6h-3.6zM574.87 335.6h3.6V391.9h-3.6zM582.68 387.5h3.6V422.5h-3.6zM590.50 408.8h3.6V432.5h-3.6zM594.41 432.5h3.6V447.5h-3.6zM602.22 443.8h3.6V444.8h-3.6zM610.04 438.1h3.6V451.9h-3.6zM617.85 420.6h3.6V434.4h-3.6zM625.67 424.4h3.6V431.9h-3.6zM629.58 431.2h3.6V438.8h-3.6zM637.39 419.4h3.6V436.2h-3.6zM649.12 420.0h3.6V438.1h-3.6zM660.84 402.5h3.6V471.2h-3.6zM664.75 469.4h3.6V475.6h-3.6zM668.65 475.6h3.6V512.5h-3.6zM672.56 511.9h3.6V518.1h-3.6zM676.47 518.1h3.6V534.4h-3.6zM680.38 534.4h3.6V538.8h-3.6zM688.19 469.4h3.6V554.4h-3.6zM699.92 533.1h3.6V541.9h-3.6zM703.82 541.9h3.6V556.2h-3.6zM711.64 541.2h3.6V583.1h-3.6zM715.55 582.5h3.6V618.8h-3.6zM723.36 605.0h3.6V608.1h-3.6zM727.27 608.1h3.6V618.8h-3.6zM738.99 601.2h3.6V613.8h-3.6zM754.63 574.4h3.6V591.9h-3.6zM758.53 591.9h3.6V595.0h-3.6zM774.17 569.4h3.6V572.5h-3.6zM778.07 571.9h3.6V586.2h-3.6zM781.98 586.2h3.6V587.5h-3.6zM785.89 586.9h3.6V611.9h-3.6zM789.80 611.2h3.6V626.9h-3.6zM793.70 626.9h3.6V631.2h-3.6zM805.43 609.4h3.6V634.4h-3.6zM813.24 628.8h3.6V629.8h-3.6zM817.15 629.4h3.6V631.9h-3.6zM821.06 631.9h3.6V683.8h-3.6zM824.97 683.1h3.6V689.4h-3.6zM828.87 689.4h3.6V708.1h-3.6zM836.69 661.9h3.6V696.9h-3.6zM848.41 668.1h3.6V680.0h-3.6zM856.23 673.1h3.6V681.2h-3.6zM860.14 681.2h3.6V684.4h-3.6zM875.77 675.0h3.6V681.9h-3.6zM879.68 681.9h3.6V683.1h-3.6zM891.40 634.4h3.6V640.6h-3.6zM903.12 628.1h3.6V635.6h-3.6zM910.94 633.1h3.6V634.1h-3.6zM914.85 633.1h3.6V634.1h-3.6zM926.57 623.1h3.6V625.6h-3.6zM930.48 625.6h3.6V630.6h-3.6zM938.29 628.1h3.6V629.4h-3.6zM942.20 629.4h3.6V630.6h-3.6zM957.83 456.9h3.6V471.9h-3.6zM961.74 471.9h3.6V476.2h-3.6zM969.56 433.8h3.6V450.0h-3.6zM973.46 450.0h3.6V463.8h-3.6zM977.37 463.8h3.6V466.9h-3.6zM981.28 466.2h3.6V480.6h-3.6zM993.00 468.1h3.6V469.4h-3.6zM1004.73 437.5h3.6V469.4h-3.6zM1028.17 433.8h3.6V445.6h-3.6zM1032.08 443.8h3.6V468.1h-3.6zM1035.99 467.5h3.6V468.5h-3.6zM1047.71 450.6h3.6V455.0h-3.6zM1055.53 450.6h3.6V494.4h-3.6zM1067.25 468.8h3.6V473.1h-3.6zM1078.97 402.5h3.6V413.1h-3.6zM1082.88 412.5h3.6V442.5h-3.6zM1086.79 442.5h3.6V457.5h-3.6zM1090.70 456.2h3.6V468.1h-3.6zM1098.51 463.8h3.6V464.8h-3.6zM1102.42 464.4h3.6V472.5h-3.6zM1110.24 468.1h3.6V469.4h-3.6zM1114.14 469.4h3.6V496.2h-3.6zM1118.05 496.2h3.6V520.6h-3.6zM1121.96 520.0h3.6V536.9h-3.6zM1133.68 486.2h3.6V493.8h-3.6zM1137.59 492.5h3.6V493.5h-3.6zM1153.22 474.4h3.6V478.1h-3.6zM1157.13 477.5h3.6V496.2h-3.6zM1168.85 453.8h3.6V473.8h-3.6zM1180.58 458.1h3.6V465.0h-3.6zM1200.12 371.9h3.6V375.6h-3.6zM1239.19 188.1h3.6V192.5h-3.6zM1243.10 192.5h3.6V219.4h-3.6zM1262.64 163.8h3.6V181.2h-3.6zM1266.55 180.0h3.6V181.2h-3.6zM1274.36 178.1h3.6V205.0h-3.6zM1278.27 203.8h3.6V251.2h-3.6zM1282.18 251.2h3.6V276.2h-3.6zM1293.90 198.1h3.6V223.1h-3.6z" fill="#f23645"/>
</g>
<g clip-path="url(#cd)" fill="none" stroke-width="1.6" stroke-linejoin="round">
<polyline points="13.8,842.9 18.1,841.9 22.5,844.4 26.9,846.9 33.8,846.0 40.6,850.0 45.0,857.5 50.0,866.2 56.9,875.6 65.0,881.2 73.1,888.1 81.2,891.2 85.6,893.8 90.0,898.1 93.8,899.0 101.9,896.5 108.8,897.2 115.0,901.9 120.0,905.6 127.5,908.5 135.0,915.0 140.0,919.4 145.0,916.9 151.2,913.1 157.5,910.6 163.1,907.5 171.2,898.5 175.0,897.5 178.1,900.0 182.5,906.9 188.8,908.5 193.8,910.0 200.0,915.0 206.2,916.0 210.0,920.0 212.5,921.9 217.5,925.0 221.2,926.0 226.9,924.4 233.1,923.1 237.5,919.4 242.5,912.5 248.1,901.2 253.8,887.5 258.8,880.0 263.8,876.9 270.0,874.4 276.2,872.5 282.5,870.2 288.1,869.8 292.5,865.0 298.8,858.8 303.8,855.0 308.8,850.6 313.1,848.1 318.8,841.9 325.0,833.8 330.0,828.8 334.4,828.8 338.1,830.6 343.8,828.5 350.0,823.8 354.4,821.5 358.5,821.0 362.5,830.0 367.5,840.6 372.5,848.1 377.5,853.8 382.5,858.8 386.2,861.9 390.6,863.8 395.0,870.0 398.1,873.8 400.0,875.0 401.2,876.0 406.2,876.5 412.5,876.9 416.9,878.8 423.8,883.8 430.0,885.0 436.2,886.2 443.8,886.9 452.5,887.8 457.5,893.8 462.5,900.0 467.5,903.1 472.5,905.0 477.5,906.9 482.5,906.0 488.8,904.8 494.4,903.5 498.8,898.8 503.1,893.5 507.5,894.8 512.5,897.5 518.8,900.2 525.0,899.8 531.2,899.0 537.5,897.8 543.8,900.6 549.4,901.2 553.8,898.1 557.5,894.0 561.9,891.2 565.6,892.5 570.0,898.1 574.4,899.4 577.5,896.9 582.5,887.5 587.5,877.5 590.0,873.8 595.0,865.6 600.0,856.2 605.0,847.5 610.0,840.6 615.0,837.5 621.2,835.6 626.2,835.0 631.2,834.4 636.2,838.8 642.5,843.8 648.1,848.1 655.0,851.0 659.6,855.0 663.8,853.1 667.5,849.4 672.5,843.1 677.5,837.5 681.9,832.8 685.6,836.9 690.0,839.4 693.8,840.6 698.1,843.8 703.1,847.2 708.8,850.0 713.1,850.0 717.5,848.1 723.8,843.8 730.0,840.0 736.2,838.1 742.5,836.5 748.8,836.0 753.1,840.6 757.5,845.0 762.5,850.0 767.5,855.6 771.2,861.9 775.6,869.4 780.0,874.4 783.8,878.1 787.5,878.5 793.8,875.6 799.6,873.5 803.8,875.6 808.8,876.2 813.8,876.0 818.8,875.6 822.5,870.0 826.2,863.8 830.0,859.4 836.2,855.0 842.5,852.5 848.8,855.6 853.8,859.4 858.8,863.1 865.0,865.6 870.0,867.5 877.5,871.9 883.8,880.0 890.0,885.0 896.2,888.8 904.4,891.9 911.2,896.2 917.5,901.9 923.8,903.8 931.2,907.5 937.5,912.2 940.0,914.4 944.4,916.9 946.9,911.2 950.0,900.0 953.8,890.0 957.5,881.2 961.2,873.8 965.0,866.2 970.0,856.2 975.0,849.4 979.4,845.0 983.1,844.8 987.5,849.4 992.5,853.8 998.8,857.5 1003.8,857.8 1010.0,860.6 1015.0,864.4 1019.4,866.6 1025.0,865.6 1029.6,863.1 1035.0,866.2 1041.9,871.5 1047.5,872.9 1053.1,872.5 1056.9,878.1 1061.2,885.0 1066.2,891.9 1070.6,896.2 1073.1,896.9 1077.5,894.4 1081.2,891.5 1085.6,893.5 1089.4,899.4 1093.1,905.0 1097.5,908.8 1102.5,912.5 1106.9,916.2 1111.2,920.0 1115.6,921.9 1120.0,920.0 1123.8,916.9 1128.8,917.5 1133.8,919.8 1138.8,923.1 1145.0,926.9 1151.2,930.0 1157.5,933.1 1161.2,934.4 1165.6,933.8 1170.0,936.2 1175.0,938.1 1181.2,938.1 1185.6,937.2 1188.8,933.8 1191.9,928.1 1195.0,921.2 1200.0,910.6 1207.5,899.0 1213.8,887.5 1218.8,876.2 1223.8,865.0 1228.1,855.0 1231.2,847.5 1233.8,837.5 1236.9,830.0 1240.0,825.0 1243.8,821.9 1248.8,819.8 1253.8,818.1 1258.8,815.6 1263.8,812.2 1268.8,811.0 1276.2,811.0 1279.4,817.5 1283.8,826.9 1287.5,835.0 1291.2,839.4 1296.2,843.8 1300.6,847.2" stroke="#f0005a"/>
<polyline points="13.8,933.1 18.1,935.0 22.5,925.0 26.2,926.2 30.6,930.6 34.4,933.1 38.8,924.4 41.2,927.2 45.0,907.5 48.8,896.9 53.1,891.6 56.9,895.0 61.0,888.8 65.0,893.1 68.8,898.8 72.9,903.5 76.9,895.6 81.2,898.1 85.0,900.6 88.8,905.0 91.9,912.5 96.2,919.4 100.9,923.8 105.0,918.8 108.8,920.0 111.9,915.0 115.6,906.2 119.4,909.4 123.1,914.4 127.1,918.5 130.6,909.4 135.0,907.2 139.4,909.4 143.1,880.4 146.9,882.5 151.2,886.9 155.0,890.9 159.4,888.5 163.1,890.6 167.1,875.0 171.2,880.6 175.0,885.0 178.1,893.8 181.9,900.0 186.2,908.1 190.0,912.5 193.8,910.6 197.5,900.6 201.9,885.0 205.6,882.9 210.0,893.1 212.5,899.4 216.9,902.5 221.2,906.9 225.6,912.5 229.6,916.9 231.9,897.5 234.4,872.5 237.5,856.2 241.2,850.0 245.6,832.5 250.0,829.4 252.1,827.5 255.6,835.0 260.0,848.8 263.8,858.8 268.1,866.9 271.9,861.6 276.2,868.1 280.0,866.9 283.8,873.8 287.9,880.0 292.1,862.5 295.6,864.8 299.4,863.8 303.8,870.6 307.5,868.5 311.9,876.9 316.2,864.1 319.4,868.8 322.5,873.8 326.9,868.8 330.0,870.6 334.4,879.4 338.1,885.6 342.2,867.1 346.2,871.5 350.6,867.5 354.4,869.4 358.8,873.8 362.5,887.5 366.2,896.9 370.0,896.5 374.0,886.9 378.1,890.6 381.9,893.5 386.2,894.4 390.2,885.6 394.4,893.8 398.1,902.5 400.0,908.8 401.2,911.2 404.8,918.1 408.8,916.2 412.9,920.0 416.9,917.5 421.0,913.1 424.6,915.0 428.8,918.8 433.1,921.5 436.9,923.1 440.6,925.0 444.4,927.1 448.1,927.5 452.5,929.0 455.0,920.0 458.1,907.5 461.9,900.0 467.5,900.6 471.2,895.6 474.0,906.2 478.8,912.5 483.1,917.5 487.5,920.0 491.2,922.5 494.8,923.8 498.8,932.5 503.1,934.0 506.9,911.0 510.6,915.6 514.8,912.2 518.8,918.8 522.5,924.4 526.2,928.1 530.0,931.2 533.8,933.1 537.5,936.0 541.2,928.8 545.6,930.0 549.4,932.5 553.1,935.6 557.5,938.5 561.0,940.6 565.0,928.8 569.1,913.1 573.1,917.5 576.9,925.0 581.2,936.9 585.6,940.0 590.0,941.2 596.2,943.8 602.5,946.9 607.5,948.8 611.2,946.2 615.6,940.6 619.4,942.2 623.8,939.8 627.5,940.6 631.2,941.5 635.6,928.5 639.4,930.6 643.8,932.2 647.9,929.0 651.5,933.1 655.4,935.6 659.4,929.4 663.1,935.6 667.5,940.0 671.2,943.1 676.2,946.0 681.9,948.5 683.8,932.5 686.0,920.0 689.8,927.5 693.8,931.2 698.1,926.9 701.9,924.4 706.2,926.9 710.0,929.4 713.8,933.1 717.5,937.5 721.2,940.0 725.6,941.9 729.6,943.1 733.8,940.6 737.5,940.0 741.2,941.0 745.0,940.2 748.8,941.0 750.6,930.0 752.5,922.8 756.2,925.6 760.6,927.2 764.4,926.5 768.1,924.4 772.1,912.8 776.2,915.0 780.0,918.1 780.6,918.5 783.8,920.0 788.1,925.0 791.9,928.1 795.6,930.2 799.6,931.5 803.8,919.4 807.5,924.4 811.9,928.1 817.5,931.0 821.9,938.1 826.2,943.1 830.6,946.0 834.4,938.8 838.1,941.2 842.2,943.5 846.2,933.1 850.0,934.4 854.6,929.4 858.8,931.0 863.1,933.1 870.0,934.4 874.4,929.4 878.1,930.6 881.2,923.8 883.8,911.9 888.5,900.0 893.1,903.8 897.5,902.5 905.0,902.2 908.8,906.0 912.5,905.6 916.9,909.8 920.9,900.4 925.0,903.1 930.0,906.2 935.0,909.4 940.0,914.4 944.4,910.0 946.2,881.2 948.1,843.8 950.0,820.0 951.5,814.8 955.0,819.4 958.8,831.2 963.1,847.5 966.9,849.0 970.6,856.2 975.0,867.5 979.4,873.8 983.1,878.1 986.9,888.8 990.6,896.9 994.4,896.0 998.8,897.2 1002.8,891.0 1006.9,899.0 1011.2,901.9 1015.0,905.0 1018.8,900.0 1021.5,889.4 1025.6,892.2 1029.6,882.8 1033.1,888.1 1036.9,891.2 1041.2,895.2 1045.6,889.4 1049.4,886.2 1053.1,886.0 1056.9,896.2 1060.6,902.5 1065.0,903.8 1069.4,905.2 1073.1,887.5 1076.9,872.5 1081.0,870.9 1085.0,880.0 1089.4,890.0 1093.1,893.8 1096.2,895.6 1100.0,882.2 1103.8,889.4 1108.1,893.1 1111.9,896.2 1115.6,904.4 1120.0,912.5 1123.8,918.1 1127.5,906.2 1131.9,902.8 1135.6,905.6 1139.6,900.0 1143.8,902.8 1147.5,905.0 1151.2,895.0 1155.0,898.8 1159.4,903.1 1162.5,891.9 1166.2,892.5 1170.0,897.5 1173.8,900.0 1178.1,890.0 1182.1,894.0 1186.2,891.2 1190.0,871.2 1194.0,846.2 1197.5,848.1 1201.9,853.5 1206.2,851.2 1210.0,847.9 1213.8,851.2 1217.9,825.6 1221.9,824.4 1226.0,816.0 1230.0,823.5 1232.5,808.1 1236.9,815.0 1240.6,828.1 1244.4,841.2 1248.8,856.2 1252.5,865.2 1256.2,862.5 1260.6,857.2 1264.4,858.1 1268.1,866.2 1271.9,873.8 1275.6,875.6 1280.0,886.9 1283.8,893.1 1288.1,898.8 1292.2,878.5 1296.2,885.0 1300.6,888.4" stroke="#2962ff"/>
<polyline points="13.8,871.9 18.1,876.9 22.5,884.4 26.6,887.5 30.6,875.6 34.6,873.5 38.1,881.2 41.9,888.8 47.5,898.1 53.1,905.0 57.5,910.0 61.2,915.6 65.0,918.1 68.8,915.0 73.1,919.4 77.5,923.1 81.2,924.0 85.0,921.9 88.8,913.1 91.2,897.5 93.1,888.1 97.5,882.5 100.9,879.8 105.0,885.6 108.8,888.1 112.5,892.5 116.2,898.8 119.4,901.2 123.1,895.9 127.1,895.4 131.2,900.0 135.0,903.1 139.4,906.2 143.1,916.2 146.9,921.2 151.2,923.8 155.0,923.1 159.4,926.2 163.1,927.5 167.5,931.9 171.2,935.0 175.0,923.8 177.5,907.5 178.8,895.0 181.9,896.2 185.6,879.4 190.0,885.0 193.8,888.8 197.5,896.2 201.9,903.1 205.6,909.0 208.8,897.5 210.0,893.8 212.5,893.5 216.9,896.2 221.2,887.5 225.6,882.9 229.4,888.8 231.9,900.0 235.0,910.6 238.8,915.0 242.5,920.0 246.9,925.6 250.0,929.4 253.1,935.0 255.9,939.4 259.4,930.0 263.8,921.0 268.1,921.0 271.9,924.0 275.6,921.5 280.0,926.2 283.8,929.0 287.5,926.0 291.2,932.2 295.6,936.0 299.4,939.0 303.8,938.1 307.8,941.9 311.6,938.5 315.6,943.1 319.4,944.8 323.1,946.6 326.9,948.5 330.6,949.1 334.4,937.5 338.1,932.2 341.9,936.9 345.6,941.2 350.0,945.4 353.8,946.0 357.5,941.9 359.4,933.1 362.1,901.5 366.2,906.9 370.0,912.5 373.8,915.6 378.1,918.8 381.9,917.5 386.2,921.0 390.2,925.0 393.1,924.4 395.6,912.5 398.1,892.5 400.0,883.8 402.5,875.0 404.8,869.8 408.8,878.1 412.9,876.2 416.9,883.8 420.6,888.8 424.6,892.1 428.8,883.1 432.5,886.9 436.9,890.0 440.6,892.5 444.4,893.8 448.1,897.5 451.9,899.0 456.2,903.1 460.0,908.8 463.8,911.9 467.5,915.0 471.2,917.5 473.1,900.0 475.6,890.0 478.8,880.6 482.5,879.8 486.2,883.8 490.0,887.5 494.8,891.2 497.2,875.0 499.0,865.6 503.1,871.2 506.9,881.2 510.6,888.8 515.0,896.5 518.8,894.4 522.8,891.5 526.2,900.0 530.0,905.0 533.8,908.1 537.5,906.9 541.2,910.6 545.6,912.5 549.4,910.0 553.1,889.4 557.5,895.0 561.2,898.8 565.0,903.8 569.4,911.0 573.1,902.5 576.2,880.0 578.8,857.5 581.2,837.5 585.0,847.5 590.0,853.8 592.5,855.6 596.2,855.0 599.4,857.5 603.8,857.2 607.5,862.5 611.9,869.4 615.6,877.5 620.0,882.5 623.8,886.2 627.5,888.1 631.2,889.8 635.6,896.2 639.4,896.9 643.8,899.4 647.5,901.9 651.5,895.6 655.6,900.6 659.6,904.4 661.2,892.5 663.1,878.8 666.2,869.4 668.8,867.5 673.8,871.0 677.9,861.2 681.9,868.1 685.6,880.6 689.8,885.6 693.8,881.6 698.1,885.6 701.9,890.0 705.6,885.6 710.0,890.2 713.8,882.5 717.5,874.0 721.2,874.0 725.6,878.5 729.4,880.0 733.1,883.1 737.5,885.0 740.6,882.5 745.0,885.6 748.8,887.5 752.5,892.5 756.2,897.5 760.0,896.9 763.8,898.1 767.5,900.0 771.9,905.0 776.2,908.1 780.0,900.6 784.0,902.8 787.5,886.2 791.2,879.8 795.6,877.5 799.6,881.9 803.8,887.5 807.5,889.0 810.6,887.8 815.0,891.9 818.8,895.0 822.5,863.1 826.6,854.4 830.6,866.2 834.4,881.9 838.1,890.6 842.5,895.0 847.5,900.0 851.9,903.8 855.6,906.2 858.8,906.9 862.1,901.5 866.2,903.5 870.6,905.0 874.4,906.9 877.9,905.0 881.2,911.9 885.0,919.4 888.8,921.9 892.5,919.8 896.9,922.8 900.6,925.0 904.8,927.5 908.8,921.9 912.5,923.8 916.9,916.0 921.2,920.0 926.2,922.2 932.2,923.1 936.2,919.4 940.0,913.1 944.4,917.5 947.5,930.0 950.6,938.1 955.0,945.0 959.4,948.1 963.1,946.2 966.9,950.0 970.9,952.8 975.0,943.1 979.4,945.6 983.1,932.5 986.9,919.8 991.2,924.4 996.2,928.8 1002.5,934.1 1006.9,932.5 1011.2,933.8 1015.0,926.9 1018.8,928.8 1022.5,933.1 1027.5,936.2 1029.8,938.5 1033.1,923.8 1036.2,920.2 1040.0,919.4 1045.0,923.8 1049.4,926.2 1053.1,929.0 1055.0,918.8 1057.5,901.9 1061.2,905.6 1065.0,908.1 1068.8,910.6 1073.1,918.8 1077.5,923.8 1081.2,927.2 1085.0,912.5 1089.4,887.2 1093.1,891.2 1096.2,893.5 1100.0,900.6 1103.8,896.2 1108.1,899.4 1112.5,901.9 1116.2,887.5 1120.0,873.8 1123.8,867.5 1127.5,878.8 1131.9,884.4 1135.6,888.1 1139.6,893.1 1143.8,894.4 1147.5,896.9 1151.2,900.6 1155.6,905.0 1159.4,900.6 1162.5,909.4 1166.2,912.5 1170.0,901.9 1173.8,903.1 1178.1,906.9 1182.1,910.6 1186.2,915.0 1190.0,921.2 1194.0,928.1 1198.1,931.5 1201.9,931.2 1206.2,933.8 1210.0,936.2 1214.4,941.2 1218.1,945.6 1221.9,948.5 1225.6,951.0 1229.4,952.5 1233.8,956.0 1237.2,956.2 1240.6,945.6 1244.4,935.6 1248.8,937.5 1253.1,939.8 1257.5,941.9 1264.4,946.0 1268.8,941.9 1272.5,939.4 1276.9,942.2 1279.4,920.0 1281.2,910.6 1284.1,907.5 1288.1,910.2 1292.2,916.2 1296.2,920.2 1300.6,923.1" stroke="#ff6d00"/>
</g>
<g><circle cx="1299.75" cy="772" r="12.9" fill="none" stroke="#ab47bc" stroke-width="2.3"/><circle cx="1308.75" cy="762.9" r="5.6" fill="#0f0f0f"/><circle cx="1308.75" cy="762.9" r="3.5" fill="#f23645"/><polygon points="1303,765 1293.75,772.6 1299.3,772.6 1295,779 1305.25,771 1300,771" fill="#ab47bc"/></g>
<g font-family="Liberation Sans, sans-serif" style="opacity:0.999" stroke-width="0.45" paint-order="stroke">
<text x="13.5" y="27.0" font-size="16.4" fill="#e6e6e6" stroke="#e6e6e6" textLength="545.5" lengthAdjust="spacing" >ChartAnalysis_4 created with TradingView.com, Aug 06, 2025 09:01 UTC</text>
<text x="24.0" y="62.5" font-size="16" fill="#c4c4c4" stroke="#c4c4c4" textLength="280.0" lengthAdjust="spacing" >Ethereum / U.S. Dollar · 1D · BINANCE</text>
<text x="314.3" y="62.5" font-size="16" fill="#c4c4c4" stroke="#c4c4c4" textLength="11.4" lengthAdjust="spacing" >O</text>
<text x="327.3" y="62.5" font-size="16" fill="#089981" stroke="#089981" textLength="63.2" lengthAdjust="spacing" >3,612.49</text>
<text x="401.1" y="62.5" font-size="16" fill="#c4c4c4" stroke="#c4c4c4" textLength="10.7" lengthAdjust="spacing" >H</text>
<text x="413.3" y="62.5" font-size="16" fill="#089981" stroke="#089981" textLength="62.5" lengthAdjust="spacing" >3,660.51</text>
<text x="486.4" y="62.5" font-size="16" fill="#c4c4c4" stroke="#c4c4c4" >L</text>
<text x="495.5" y="62.5" font-size="16" fill="#089981" stroke="#089981" textLength="65.6" lengthAdjust="spacing" >3,565.60</text>
<text x="571.2" y="62.5" font-size="16" fill="#c4c4c4" stroke="#c4c4c4" textLength="10.7" lengthAdjust="spacing" >C</text>
<text x="583.1" y="62.5" font-size="16" fill="#089981" stroke="#089981" textLength="59.6" lengthAdjust="spacing" >3,621.71</text>
<text x="652.9" y="62.5" font-size="16" fill="#089981" stroke="#089981" textLength="117.0" lengthAdjust="spacing" >+8.68 (+0.24%)</text>
<text x="24.0" y="85.0" font-size="16" fill="#c4c4c4" stroke="#c4c4c4" textLength="136.0" lengthAdjust="spacing" >Supertrend (10, 3)</text>
<text x="170.0" y="85.0" font-size="16" fill="#4caf50" stroke="#4caf50" textLength="66.2" lengthAdjust="spacing" >3,338.34</text>
<text x="247" y="84.5" font-size="13.5" fill="#c4c4c4" font-family="DejaVu Sans, Liberation Sans, sans-serif">∅</text>
<text x="24.2" y="817.0" font-size="16" fill="#c4c4c4" stroke="#c4c4c4" textLength="88.8" lengthAdjust="spacing" >DMI (14, 14)</text>
<text x="124.2" y="817.0" font-size="16" fill="#f0005a" stroke="#f0005a" textLength="62.0" lengthAdjust="spacing" >38.6080</text>
<text x="197.5" y="817.0" font-size="16" fill="#2962ff" stroke="#2962ff" textLength="60.8" lengthAdjust="spacing" >26.0249</text>
<text x="268.8" y="817.0" font-size="16" fill="#ff6d00" stroke="#ff6d00" textLength="60.0" lengthAdjust="spacing" >15.6398</text>
<text x="1503.7" y="773.4" font-size="16" fill="#b6b6b6" stroke="#b6b6b6" textLength="68.4" lengthAdjust="spacing" >1,200.00</text>
<text x="1503.7" y="728.1" font-size="16" fill="#b6b6b6" stroke="#b6b6b6" textLength="68.4" lengthAdjust="spacing" >1,400.00</text>
<text x="1503.7" y="682.9" font-size="16" fill="#b6b6b6" stroke="#b6b6b6" textLength="68.4" lengthAdjust="spacing" >1,600.00</text>
<text x="1503.7" y="637.6" font-size="16" fill="#b6b6b6" stroke="#b6b6b6" textLength="68.4" lengthAdjust="spacing" >1,800.00</text>
<text x="1503.7" y="592.4" font-size="16" fill="#b6b6b6" stroke="#b6b6b6" textLength="68.4" lengthAdjust="spacing" >2,000.00</text>
<text x="1503.7" y="547.1" font-size="16" fill="#b6b6b6" stroke="#b6b6b6" textLength="68.4" lengthAdjust="spacing" >2,200.00</text>
<text x="1503.7" y="501.9" font-size="16" fill="#b6b6b6" stroke="#b6b6b6" textLength="68.4" lengthAdjust="spacing" >2,400.00</text>
<text x="1503.7" y="456.6" font-size="16" fill="#b6b6b6" stroke="#b6b6b6" textLength="68.4" lengthAdjust="spacing" >2,600.00</text>
<text x="1503.7" y="411.4" font-size="16" fill="#b6b6b6" stroke="#b6b6b6" textLength="68.4" lengthAdjust="spacing" >2,800.00</text>
<text x="1503.7" y="366.1" font-size="16" fill="#b6b6b6" stroke="#b6b6b6" textLength="68.4" lengthAdjust="spacing" >3,000.00</text>
<text x="1503.7" y="320.9" font-size="16" fill="#b6b6b6" stroke="#b6b6b6" textLength="68.4" lengthAdjust="spacing" >3,200.00</text>
<text x="1503.7" y="275.6" font-size="16" fill="#b6b6b6" stroke="#b6b6b6" textLength="68.4" lengthAdjust="spacing" >3,400.00</text>
<text x="1503.7" y="230.4" font-size="16" fill="#b6b6b6" stroke="#b6b6b6" textLength="68.4" lengthAdjust="spacing" >3,600.00</text>
<text x="1503.7" y="185.2" font-size="16" fill="#b6b6b6" stroke="#b6b6b6" textLength="68.4" lengthAdjust="spacing" >3,800.00</text>
<text x="1503.7" y="139.9" font-size="16" fill="#b6b6b6" stroke="#b6b6b6" textLength="68.4" lengthAdjust="spacing" >4,000.00</text>
<text x="1503.7" y="94.7" font-size="16" fill="#b6b6b6" stroke="#b6b6b6" textLength="68.4" lengthAdjust="spacing" >4,200.00</text>
<text x="1503.7" y="49.4" font-size="16" fill="#b6b6b6" stroke="#b6b6b6" textLength="68.4" lengthAdjust="spacing" >4,400.00</text>
<text x="1504.7" y="913.5" font-size="16" fill="#b6b6b6" stroke="#b6b6b6" textLength="62.5" lengthAdjust="spacing" >20.0000</text>
<text x="92.1" y="998.0" font-size="16" fill="#b6b6b6" stroke="#b6b6b6" text-anchor="middle" letter-spacing="0.4">Oct</text>
<text x="213.2" y="998.0" font-size="16" fill="#b6b6b6" stroke="#b6b6b6" text-anchor="middle" letter-spacing="0.4">Nov</text>
<text x="330.5" y="998.0" font-size="16" fill="#b6b6b6" stroke="#b6b6b6" text-anchor="middle" letter-spacing="0.4">Dec</text>
<text x="572.8" y="998.0" font-size="16" fill="#b6b6b6" stroke="#b6b6b6" text-anchor="middle" letter-spacing="0.4">Feb</text>
<text x="682.2" y="998.0" font-size="16" fill="#b6b6b6" stroke="#b6b6b6" text-anchor="middle" letter-spacing="0.4">Mar</text>
<text x="803.3" y="998.0" font-size="16" fill="#b6b6b6" stroke="#b6b6b6" text-anchor="middle" letter-spacing="0.4">Apr</text>
<text x="920.6" y="998.0" font-size="16" fill="#b6b6b6" stroke="#b6b6b6" text-anchor="middle" letter-spacing="0.4">May</text>
<text x="1041.7" y="998.0" font-size="16" fill="#b6b6b6" stroke="#b6b6b6" text-anchor="middle" letter-spacing="0.4">Jun</text>
<text x="1158.9" y="998.0" font-size="16" fill="#b6b6b6" stroke="#b6b6b6" text-anchor="middle" letter-spacing="0.4">Jul</text>
<text x="1280.1" y="998.0" font-size="16" fill="#b6b6b6" stroke="#b6b6b6" text-anchor="middle" letter-spacing="0.4">Aug</text>
<text x="1401.2" y="998.0" font-size="16" fill="#b6b6b6" stroke="#b6b6b6" text-anchor="middle" letter-spacing="0.4">Sep</text>
<text x="452.5" y="998.0" font-size="16" fill="#d6d6d6" stroke="#d6d6d6" text-anchor="middle" font-weight="bold" letter-spacing="1.8">2025</text>
<path d="M1492.2 209.0H1577.4a3 3 0 0 1 3 3V248.0a3 3 0 0 1 -3 3H1492.2z" fill="#089981"/>
<text x="1504.0" y="225.6" font-size="16" fill="#ffffff" stroke="#ffffff" textLength="67.5" lengthAdjust="spacing" stroke-width="0.2" >3,621.71</text>
<text x="1504.7" y="244.0" font-size="16" fill="#c9ebe5" stroke="#c9ebe5" textLength="66.8" lengthAdjust="spacing" stroke-width="0.2" >14:58:33</text>
<path d="M1492.2 274.0H1577.4a3 3 0 0 1 3 3V293.5a3 3 0 0 1 -3 3H1492.2z" fill="#4caf50"/>
<text x="1504.0" y="288.8" font-size="16" fill="#ffffff" stroke="#ffffff" textLength="67.5" lengthAdjust="spacing" stroke-width="0.2" >3,338.34</text>
<path d="M1492.2 426.9H1577.4a3 3 0 0 1 3 3V446.8a3 3 0 0 1 -3 3H1492.2z" fill="#f23645"/>
<text x="1504.0" y="443.1" font-size="16" fill="#ffffff" stroke="#ffffff" textLength="67.5" lengthAdjust="spacing" stroke-width="0.2" >2,661.05</text>
<path d="M1492.2 835.6H1571.8a3 3 0 0 1 3 3V855.8a3 3 0 0 1 -3 3H1492.2z" fill="#f0005a"/>
<text x="1504.0" y="852.1" font-size="16" fill="#ffffff" stroke="#ffffff" textLength="63.2" lengthAdjust="spacing" stroke-width="0.2" >38.6080</text>
<path d="M1492.2 877.5H1571.8a3 3 0 0 1 3 3V897.0a3 3 0 0 1 -3 3H1492.2z" fill="#2962ff"/>
<text x="1504.0" y="893.8" font-size="16" fill="#ffffff" stroke="#ffffff" textLength="63.2" lengthAdjust="spacing" stroke-width="0.2" >26.0249</text>
<path d="M1492.2 911.2H1571.8a3 3 0 0 1 3 3V931.0a3 3 0 0 1 -3 3H1492.2z" fill="#ff6d00"/>
<text x="1504.7" y="927.8" font-size="16" fill="#ffffff" stroke="#ffffff" textLength="62.5" lengthAdjust="spacing" stroke-width="0.2" >15.6398</text>
</g>
<g fill="#d9d9d9"><g transform="translate(15.8,1034.35) scale(1.118,1.097)"><path d="M14 22H7V11H0V4h14z"/><circle cx="20" cy="8" r="4"/><path d="M28 22h-8l7.5-18h8z"/></g><text x="65.8" y="1058.5" font-size="27" font-weight="bold" stroke="#d9d9d9" stroke-width="0.7" font-family="Liberation Sans, sans-serif" textLength="159" lengthAdjust="spacing">TradingView</text></g>
</svg>
</body></html>
